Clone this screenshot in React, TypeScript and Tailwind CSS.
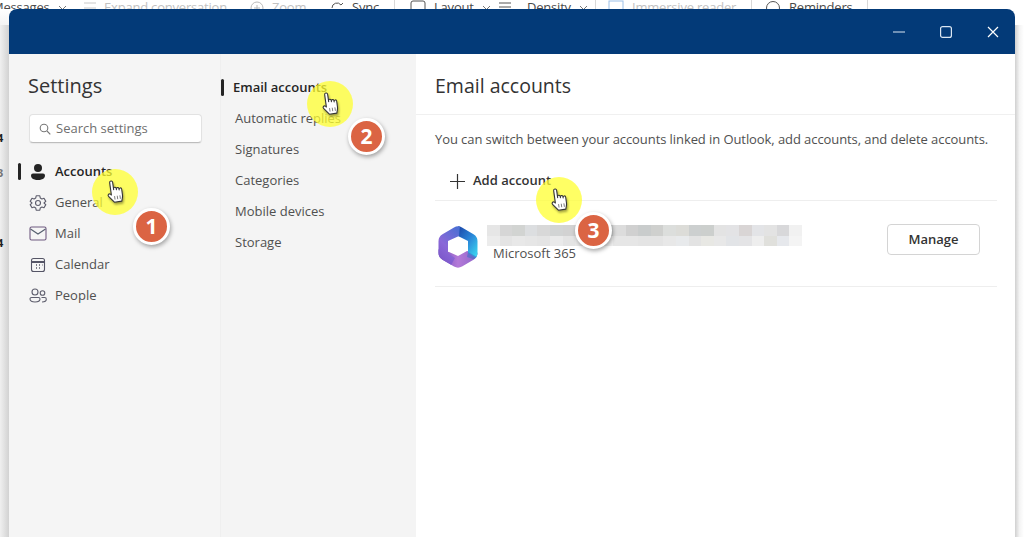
import React from "react";

const FONT = "font-['Open_Sans','Noto_Sans',sans-serif]";

function Hand() {
  return (
    <svg width="20" height="26" viewBox="0 0 20 26" className="drop-shadow-[1px_2px_1px_rgba(0,0,0,0.35)]">
      <g transform="rotate(-8 10 13)">
        <path
          d="M6 3a1.5 1.5 0 0 1 3 0V10.5V9.3a1.4 1.4 0 0 1 2.7 0V11V10a1.4 1.4 0 0 1 2.7 0V11.5V11a1.3 1.3 0 0 1 2.6 0V17c0 2.500-.9 3.500-1.500 6H8L3 16.500c-1-1.700.8-3.200 2.200-2L6 15.500Z"
          fill="#fff"
          stroke="#333"
          strokeWidth="1.100"
          strokeLinejoin="round"
        />
        <path d="M9 17v3.500M11.700 17v3.500M14.400 17v3.500" stroke="#666" strokeWidth="0.800" />
      </g>
    </svg>
  );
}

function Marker({ cx, cy, bx, by, n }: { cx: number; cy: number; bx: number; by: number; n: number }) {
  return (
    <>
      <div
        className="absolute w-[46px] h-[46px] rounded-full bg-[#ffff30]/75 flex items-center justify-center"
        style={{ left: cx - 23, top: cy - 23 }}
      >
        <Hand />
      </div>
      <div
        className={`absolute w-[37px] h-[37px] rounded-full bg-[#db6443] border-[3px] border-white shadow-[1px_2px_4px_rgba(0,0,0,0.35)] flex items-center justify-center text-white text-[21px] font-bold ${FONT}`}
        style={{ left: bx - 18, top: by - 18 }}
      >
        {n}
      </div>
    </>
  );
}

const PersonIcon = () => (
  <svg width="18" height="18" viewBox="0 0 18 18" fill="#242424">
    <circle cx="9" cy="5" r="4" />
    <path d="M2 12.500a2 2 0 0 1 2-2h10a2 2 0 0 1 2 2c0 3-3 4.500-7 4.500s-7-1.500-7-4.500Z" />
  </svg>
);
const GearIcon = () => (
  <svg width="18" height="18" viewBox="0 0 24 24" fill="none" stroke="#5f5f6e" strokeWidth="1.500" strokeLinejoin="round">
    <path d="M9.600 2.400 L14.400 2.400 L15 5.300 L17.200 6.600 L20 5.600 L22.400 9.800 L20.200 11.700 V12.300 L22.400 14.200 L20 18.400 L17.200 17.400 L15 18.700 L14.400 21.600 H9.600 L9 18.700 L6.800 17.400 L4 18.400 L1.600 14.200 L3.800 12.300 V11.700 L1.600 9.800 L4 5.600 L6.800 6.600 L9 5.300Z" />
    <circle cx="12" cy="12" r="3.300" />
  </svg>
);
const MailIcon = () => (
  <svg width="18" height="15" viewBox="0 0 18 15" fill="none" strokeWidth="1.100">
    <rect x="1" y="1" width="16" height="13" rx="1.500" stroke="#6f5a80" />
    <path d="M1.500 3 9 8l7.500-5" stroke="#555f6e" />
  </svg>
);
const CalendarIcon = () => (
  <svg width="16" height="16" viewBox="0 0 16 16" fill="none" stroke="#555566" strokeWidth="1.100">
    <rect x="1.500" y="1.500" width="13" height="13" rx="2" />
    <path d="M1.500 5h13" strokeWidth="2" />
    <path d="M6 8h1M9 8h1M12 8h.5M6 11h1M9 11h1" strokeWidth="1.300" />
  </svg>
);
const PeopleIcon = () => (
  <svg width="18" height="15" viewBox="0 0 18 15" fill="none" stroke="#5f5f6e" strokeWidth="1.100">
    <circle cx="6" cy="4" r="3" />
    <circle cx="13.500" cy="5" r="2.300" />
    <path d="M1 11a1.500 1.500 0 0 1 1.500-1.500h7A1.500 1.500 0 0 1 11 11c0 2-2 3-5 3s-5-1-5-3Z" />
    <path d="M13 14c2.500 0 4.300-.8 4.300-2.700 0-1-.6-1.800-1.600-1.800H12.500" />
  </svg>
);

function NavItem({ icon, label, active }: { icon: React.ReactNode; label: string; active?: boolean }) {
  return (
    <div className="relative h-[31px] flex items-center pl-[19px]">
      {active && <div className="absolute left-[9px] top-[7px] w-[3px] h-[17px] rounded-sm bg-[#242424]" />}
      <div className="w-[27px] flex items-center">
        <span className="w-[20px] flex justify-center">{icon}</span>
      </div>
      <span className={active ? "text-[13px] font-semibold text-[#242424]" : "text-[13px] text-[#505050]"}>{label}</span>
    </div>
  );
}

const ROW1 = ["#e6e6e6", "#d6d6d6", "#d2d4d2", "#dcdee0", "#d8d8d8", "#d2d4d4", "#d2d2d2", "#d6d6d6", "#d4d4d4", "#d0d2d2", "#dcdcdc", "#d0d0d0", "#c9cccc", "#cfd0ce", "#dcdedc", "#dcdcd8", "#cccfcf", "#cccfcd", "#e3e3e3", "#e3e3e5", "#d9d5d5", "#e3e4e7", "#e3e3e3", "#d8d8da", "#f1f1f1"];
const ROW2 = ["#ececec", "#e4e4e4", "#e8e8e8", "#e6e6e6", "#e4e4e4", "#eaeaea", "#e4e4e4", "#e8e8e8", "#e8e8e8", "#eeeeee", "#e6e6e6", "#e6e6e6", "#e4e4e4", "#e4e4e4", "#e8e8e8", "#e8eaec", "#e3e3e3", "#e8e8e4", "#e8e8e8", "#e2e4e7", "#e4e4e6", "#eeeeee", "#e0e0dc", "#e6e8ec", "#f4f4f4"];

function Pixelated() {
  return (
    <svg width="315" height="21" viewBox="0 0 315 21" shapeRendering="crispEdges" className="block">
      {ROW1.map((c, i) => (
        <rect key={`a${i}`} x={i * 12.6} y="0" width="12.6" height="11" fill={c} />
      ))}
      {ROW2.map((c, i) => (
        <rect key={`b${i}`} x={i * 12.6} y="11" width="12.6" height="10" fill={c} />
      ))}
    </svg>
  );
}

function Logo() {
  return (
    <svg width="42" height="44" viewBox="0 0 42 44" className="mt-[6px] shrink-0">
      <defs>
        <clipPath id="hex">
          <path d="M17 2.500q4-2.300 8 0l11.500 6.800q4 2.300 4 7v11.400q0 4.700-4 7L25 41.500q-4 2.300-8 0L5.500 34.700q-4-2.300-4-7V16.300q0-4.700 4-7Z" />
        </clipPath>
        <linearGradient id="g1" x1="0.200" y1="0" x2="0.900" y2="0.800">
          <stop offset="0" stopColor="#1d4fae" />
          <stop offset="0.500" stopColor="#2a86d8" />
          <stop offset="1" stopColor="#39cfee" />
        </linearGradient>
        <linearGradient id="g2" x1="0.700" y1="0" x2="0.200" y2="1">
          <stop offset="0" stopColor="#4f6fd4" />
          <stop offset="0.500" stopColor="#8a68d8" />
          <stop offset="1" stopColor="#7650c4" />
        </linearGradient>
        <linearGradient id="g3" x1="0" y1="0.500" x2="1" y2="0.500">
          <stop offset="0" stopColor="#6a4bb8" />
          <stop offset="0.500" stopColor="#b47ad8" />
          <stop offset="1" stopColor="#8a62c8" />
        </linearGradient>
      </defs>
      <g clipPath="url(#hex)">
        <polygon points="0,44 42,44 42,28 30,26 21,31 12,27 0,24" fill="url(#g3)" />
        <polygon points="21,0 42,0 42,35 31,28 31,16 21,11" fill="url(#g1)" />
        <polygon points="0,0 23,0 22,11 11,16 11,28 18,33 12,44 0,44" fill="url(#g2)" />
        <polygon points="31,27 42,33 42,36 30,32" fill="#3f6ec6" opacity="0.600" />
      </g>
      <path transform="translate(3.200 3.300) scale(0.85)" d="M19.500 12.800q1.500-.8 3 0l5.500 3.200q1.500.9 1.500 2.500v7q0 1.600-1.500 2.500l-5.500 3.200q-1.500.8-3 0L14 27.500q-1.500-.9-1.500-2.500v-6.500q0-1.600 1.500-2.500Z" fill="#fff" />
    </svg>
  );
}

function SubItem({ label, active, x = 14 }: { label: string; active?: boolean; x?: number }) {
  return (
    <div className="relative h-[31px] flex items-center" style={{ paddingLeft: x }}>
      {active && <div className="absolute left-0 top-[7px] w-[3px] h-[17px] rounded-sm bg-[#242424]" />}
      <span className={active ? "text-[13px] font-semibold text-[#242424]" : "text-[13px] text-[#505050]"}>{label}</span>
    </div>
  );
}

function ToolItem({ w, children, off }: { w: string; children: React.ReactNode; off?: boolean }) {
  return (
    <div className={`${w} shrink-0 flex items-center gap-[8px] whitespace-nowrap ${off ? "text-[#c2c2c2]" : "text-[#4a4a4a]"}`}>
      {children}
    </div>
  );
}

function Chevron() {
  return (
    <svg width="9" height="6" viewBox="0 0 9 6" fill="none" stroke="#777" strokeWidth="1">
      <path d="M1 1l3.500 3.500L8 1" />
    </svg>
  );
}

function Toolbar() {
  return (
    <div className={`h-[9px] overflow-hidden bg-white text-[13px] tracking-[-0.2px] ${FONT}`}>
      <div className="h-[18px] -mt-[1px] -ml-[8px] flex items-center">
        <ToolItem w="w-[86px]">Messages <Chevron /></ToolItem>
        <ToolItem w="w-[172px]" off>
          <svg width="18" height="14" viewBox="0 0 18 14" fill="none" stroke="#c8c8c8"><path d="M6 2h12M6 7h12M1 12h17" /></svg>
          Expand conversation
        </ToolItem>
        <ToolItem w="w-[80px]" off>
          <svg width="14" height="14" viewBox="0 0 14 14" fill="none" stroke="#bbb"><circle cx="7" cy="7" r="6" /><path d="M7 4v6M4 7h6" /></svg>
          Zoom
        </ToolItem>
        <ToolItem w="w-[64px]">
          <svg width="14" height="14" viewBox="0 0 14 14" fill="none" stroke="#555"><path d="M2 7a5 5 0 0 1 9-3l2-2" /></svg>
          Sync
        </ToolItem>
        <div className="w-px h-[18px] bg-[#d8d8d8] mr-[15px]" />
        <ToolItem w="w-[88px]">
          <svg width="16" height="16" viewBox="0 0 16 16" fill="none" stroke="#555"><rect x="1" y="1" width="14" height="14" rx="2" /></svg>
          Layout <Chevron />
        </ToolItem>
        <ToolItem w="w-[97px]">
          <svg width="14" height="14" viewBox="0 0 14 14" fill="none" stroke="#555"><path d="M1 2h12M1 6h12M1 10h12" /></svg>
          <span className="ml-[7px]">Density</span> <Chevron />
        </ToolItem>
        <div className="w-px h-[18px] bg-[#d8d8d8] mr-[12px]" />
        <ToolItem w="w-[143px]" off>
          <svg width="16" height="16" viewBox="0 0 16 16" fill="none" stroke="#9cc0e8"><rect x="1" y="1" width="14" height="14" /></svg>
          Immersive reader
        </ToolItem>
        <div className="w-px h-[18px] bg-[#d8d8d8] mr-[13px]" />
        <ToolItem w="w-[102px]">
          <svg width="16" height="16" viewBox="0 0 16 16" fill="none" stroke="#555"><circle cx="8" cy="8" r="6.500" /></svg>
          Reminders
        </ToolItem>
        <div className="w-px h-[18px] bg-[#d8d8d8] mr-[16px]" />
        <span className="text-[#333] font-bold tracking-[1px]">...</span>
      </div>
    </div>
  );
}

export default function App() {
  return (
    <div className={`relative w-[1024px] h-[537px] overflow-hidden bg-white flex flex-col ${FONT}`}>
      <Toolbar />
      <div className="flex-1 flex min-h-0">
        <div className="w-[9px] shrink-0 flex flex-col overflow-hidden">
          <div className="h-[16px] bg-gradient-to-b from-white to-[#f4f4f4]" />
          <div className="flex-1 bg-gradient-to-r from-[#f0f0f0] to-[#d2d2d2] text-[11px] font-bold text-[#222] leading-none -indent-[3px]">
            <div className="mt-[107px]">4</div>
            <div className="mt-[24px] text-[#777]">3</div>
            <div className="mt-[59px]">4</div>
          </div>
        </div>
        <div className="w-[1006px] shrink-0 flex flex-col rounded-t-lg overflow-hidden bg-white">
          <div className="h-[45px] shrink-0 bg-[#033a78] flex items-center justify-end pr-[16px] gap-[35px]">
            <svg width="12" height="12" viewBox="0 0 12 12" fill="none" stroke="#dbe6f2" strokeWidth="1.200"><path d="M0 6h12" /></svg>
            <svg width="12" height="12" viewBox="0 0 12 12" fill="none" stroke="#dbe6f2" strokeWidth="1.200"><rect x="0.600" y="0.600" width="10.800" height="10.800" rx="2" /></svg>
            <svg width="12" height="12" viewBox="0 0 12 12" fill="none" stroke="#fff" strokeWidth="1.200"><path d="M1 1l10 10M11 1L1 11" /></svg>
          </div>
          <div className="flex-1 flex min-h-0">
            <div className="w-[212px] shrink-0 bg-[#f5f5f5] border-r border-[#efefef]">
              <div className="pl-[19px] pt-[16px] text-[20px] leading-[32px] text-[#333] h-[60px]">Settings</div>
              <div className="ml-[20px] w-[173px] h-[29px] bg-white rounded-[4px] border border-[#e2e2e2] border-b-[#bdbdbd] flex items-center pl-[9px] gap-[5px] shadow-[0_1px_1px_rgba(0,0,0,0.05)]">
                <svg width="12" height="12" viewBox="0 0 12 12" fill="none" stroke="#777" strokeWidth="1.100"><circle cx="5" cy="5" r="3.800" /><path d="M8 8l3.300 3.300" /></svg>
                <span className="text-[13px] text-[#6f6f6f]">Search settings</span>
              </div>
              <div className="mt-[13px]">
                <NavItem icon={<PersonIcon />} label="Accounts" active />
                <NavItem icon={<GearIcon />} label="General" />
                <NavItem icon={<MailIcon />} label="Mail" />
                <NavItem icon={<CalendarIcon />} label="Calendar" />
                <NavItem icon={<PeopleIcon />} label="People" />
              </div>
            </div>
            <div className="w-[195px] shrink-0 bg-[#f4f4f4] pt-[18px]">
              <SubItem label="Email accounts" active x={12} />
              <SubItem label="Automatic replies" />
              <SubItem label="Signatures" />
              <SubItem label="Categories" />
              <SubItem label="Mobile devices" />
              <SubItem label="Storage" />
            </div>
            <div className="flex-1 min-w-0 bg-white">
              <div className="h-[61px] border-b border-[#f0f0f0] pl-[19px] pt-[16px] text-[19.5px] leading-[32px] font-medium text-[#333]">Email accounts</div>
              <div className="pl-[19px] pr-[18px]">
                <div className="h-[49px] pt-[14px] text-[13px] leading-[20px] tracking-[-0.08px] text-[#505050] whitespace-nowrap">You can switch between your accounts linked in Outlook, add accounts, and delete accounts.</div>
                <div className="h-[37px] border-b border-[#eeeeee] flex items-center pl-[15px] pb-[2px] gap-[8px]">
                  <svg width="15" height="15" viewBox="0 0 15 15" stroke="#333" strokeWidth="1.200"><path d="M7.500 0v15M0 7.500h15" /></svg>
                  <span className="text-[13px] font-semibold text-[#333]">Add account</span>
                </div>
                <div className="h-[86px] border-b border-[#eeeeee] flex items-center pl-[2px] pr-[17px]">
                  <Logo />
                  <div className="w-[325px] ml-[8px]">
                    <div className="mb-[-1px]"><Pixelated /></div>
                    <div className="pl-[6px] text-[13px] leading-[18px] mt-[-2px] text-[#505050]">Microsoft 365</div>
                  </div>
                  <div className="ml-auto -mt-[8px] w-[93px] h-[31px] rounded-[4px] border border-[#d4d4d4] flex items-center justify-center text-[13px] font-semibold text-[#333]">Manage</div>
                </div>
              </div>
            </div>
          </div>
        </div>
        <div className="w-[9px] shrink-0 flex flex-col">
          <div className="h-[16px] bg-white" />
          <div className="flex-1 bg-gradient-to-r from-[#d0d0d0] via-[#f4f4f4] to-white" />
        </div>
      </div>
      <Marker cx={115} cy={192} bx={151} by={226} n={1} />
      <Marker cx={330} cy={104} bx={366} by={136} n={2} />
      <Marker cx={559} cy={200} bx={593} by={230} n={3} />
    </div>
  );
}
